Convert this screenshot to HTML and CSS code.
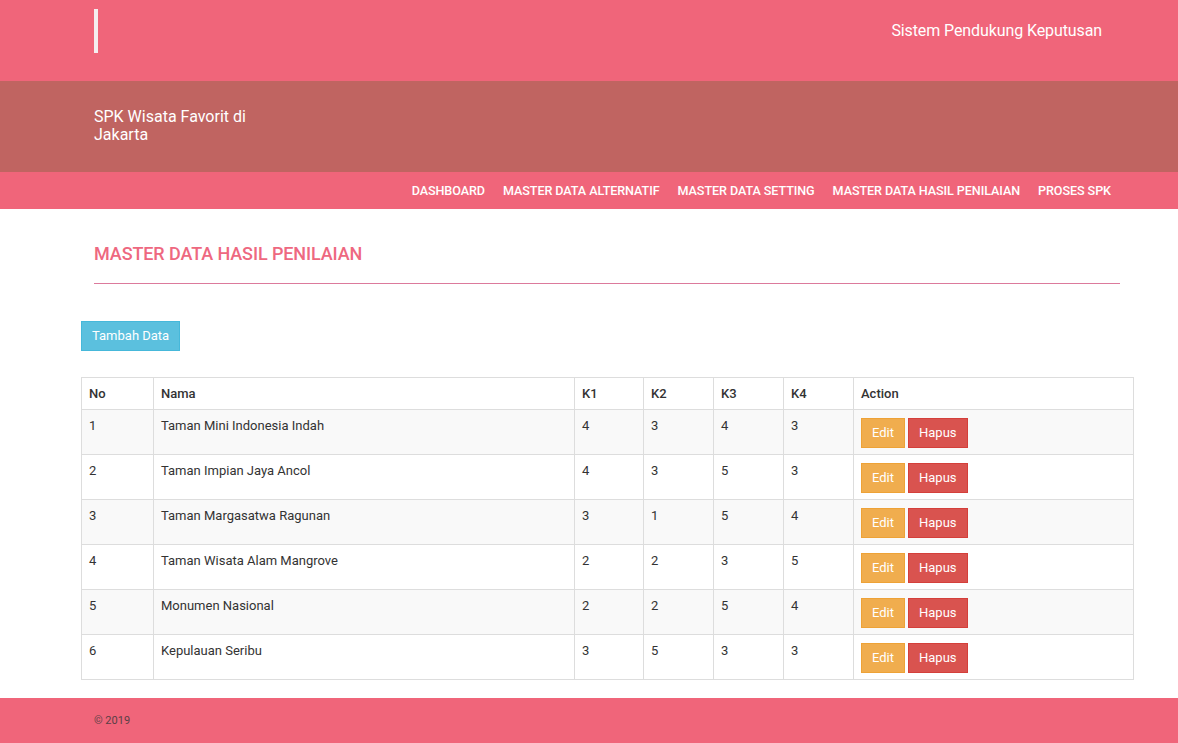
FILE: index.html
```html
<!DOCTYPE html>
<html lang="id">
<head>
<meta charset="utf-8">
<title>SPK Wisata Favorit di Jakarta</title>
<link rel="stylesheet" href="styles.css">
</head>
<body>
<header class="topbar">
  <div class="wrap topbar-inner">
    <span class="logo-bar"></span>
    <span class="site-title">Sistem Pendukung Keputusan</span>
  </div>
</header>
<section class="banner">
  <div class="wrap">
    <h1 class="banner-title">SPK Wisata Favorit di Jakarta</h1>
  </div>
</section>
<nav class="navbar">
  <div class="wrap nav-inner">
    <a href="#">DASHBOARD</a>
    <a href="#">MASTER DATA ALTERNATIF</a>
    <a href="#">MASTER DATA SETTING</a>
    <a href="#">MASTER DATA HASIL PENILAIAN</a>
    <a href="#">PROSES SPK</a>
  </div>
</nav>
<main class="wrap content">
  <h2 class="page-title">MASTER DATA HASIL PENILAIAN</h2>
  <div class="title-rule"></div>
  <div class="panel">
    <button class="btn btn-info">Tambah Data</button>
    <table class="data-table">
      <colgroup>
        <col class="c-no"><col class="c-nama"><col class="c-k1"><col class="c-k"><col class="c-k"><col class="c-k"><col>
      </colgroup>
      <thead>
        <tr><th>No</th><th>Nama</th><th>K1</th><th>K2</th><th>K3</th><th>K4</th><th>Action</th></tr>
      </thead>
      <tbody>
        <tr><td>1</td><td>Taman Mini Indonesia Indah</td><td>4</td><td>3</td><td>4</td><td>3</td><td><div class="actions"><button class="btn btn-warning">Edit</button><button class="btn btn-danger">Hapus</button></div></td></tr>
        <tr><td>2</td><td>Taman Impian Jaya Ancol</td><td>4</td><td>3</td><td>5</td><td>3</td><td><div class="actions"><button class="btn btn-warning">Edit</button><button class="btn btn-danger">Hapus</button></div></td></tr>
        <tr><td>3</td><td>Taman Margasatwa Ragunan</td><td>3</td><td>1</td><td>5</td><td>4</td><td><div class="actions"><button class="btn btn-warning">Edit</button><button class="btn btn-danger">Hapus</button></div></td></tr>
        <tr><td>4</td><td>Taman Wisata Alam Mangrove</td><td>2</td><td>2</td><td>3</td><td>5</td><td><div class="actions"><button class="btn btn-warning">Edit</button><button class="btn btn-danger">Hapus</button></div></td></tr>
        <tr><td>5</td><td>Monumen Nasional</td><td>2</td><td>2</td><td>5</td><td>4</td><td><div class="actions"><button class="btn btn-warning">Edit</button><button class="btn btn-danger">Hapus</button></div></td></tr>
        <tr><td>6</td><td>Kepulauan Seribu</td><td>3</td><td>5</td><td>3</td><td>3</td><td><div class="actions"><button class="btn btn-warning">Edit</button><button class="btn btn-danger">Hapus</button></div></td></tr>
      </tbody>
    </table>
  </div>
</main>
<footer class="footer">
  <div class="wrap">© 2019</div>
</footer>
</body>
</html>
```

FILE: styles.css
```css
* { box-sizing: border-box; }
html, body { margin: 0; padding: 0; }
body {
  font-family: Roboto, "Liberation Sans", Arial, sans-serif;
  font-size: 13px;
  color: #333;
  background: #fff;
}
.wrap {
  margin: 0 58px 0 94px;
}
.topbar {
  background: #f0657a;
  height: 81px;
}
.topbar-inner {
  display: flex;
  justify-content: space-between;
  align-items: flex-start;
  height: 81px;
  padding-right: 18px;
}
.logo-bar {
  display: block;
  width: 4px;
  height: 44px;
  margin-top: 9px;
  background: #f5eef0;
}
.site-title {
  color: #fff;
  font-size: 16px;
  line-height: 20px;
  margin-top: 21px;
  letter-spacing: -0.1px;
}
.banner {
  background: #c06461;
  height: 91px;
}
.banner-title {
  margin: 0;
  padding-top: 27px;
  width: 165px;
  font-size: 16px;
  font-weight: 400;
  line-height: 18px;
  color: #fff;
}
.navbar {
  background: #f0657a;
  height: 37px;
}
.nav-inner {
  display: flex;
  justify-content: flex-end;
  align-items: center;
  height: 37px;
}
.nav-inner a {
  color: #fff;
  text-decoration: none;
  font-size: 12.6px;
  font-weight: 500;
  padding: 0 9px;
  line-height: 37px;
  letter-spacing: -0.08px;
}
.content {
  padding-top: 35px;
}
.page-title {
  margin: 0;
  font-size: 18px;
  font-weight: 500;
  line-height: 20px;
  color: #ee6880;
  letter-spacing: -0.1px;
}
.title-rule {
  height: 1px;
  background: #dc7a9c;
  margin-top: 19px;
}
.panel {
  margin: 37px -14px 0 -13px;
}
.btn {
  font-family: inherit;
  font-size: 13px;
  color: #fff;
  border: 1px solid transparent;
  border-radius: 0;
  cursor: pointer;
  line-height: 16px;
}
.btn-info {
  background: #5bc0de;
  border-color: #46b8da;
  height: 30px;
  padding: 0 10px;
}
.btn-warning {
  background: #f0ad4e;
  border-color: #eea236;
  height: 30px;
  padding: 0 10px;
}
.btn-danger {
  background: #d9534f;
  border-color: #d43f3a;
  height: 30px;
  padding: 0 10px;
}
.data-table {
  margin-top: 26px;
  width: 100%;
  border-collapse: collapse;
  border: 1px solid #ddd;
}
.c-no { width: 72px; }
.c-nama { width: 421px; }
.c-k1 { width: 69px; }
.c-k { width: 70px; }
.data-table th,
.data-table td {
  border: 1px solid #ddd;
  text-align: left;
  vertical-align: top;
  line-height: 16px;
}
.data-table th {
  font-weight: 500;
  padding: 8px 7px 7px;
  color: #333;
}
.data-table td {
  padding: 8px 7px 5px;
  height: 45px;
}
.data-table tbody tr:nth-child(odd) {
  background: #f9f9f9;
}
.actions {
  display: flex;
  gap: 3px;
}
.footer {
  margin-top: 18px;
  background: #f0657a;
  height: 45px;
  font-size: 11px;
  line-height: 45px;
  color: #5a4046;
}
```
